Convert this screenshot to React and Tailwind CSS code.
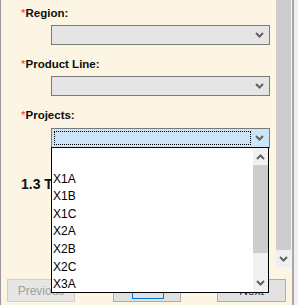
import React from 'react';

const font = { fontFamily: '"Liberation Sans", Arial, sans-serif' };

const Chevron = ({ up = false, className = '' }) => (
    <svg width="9" height="6" viewBox="0 0 9 6" className={className}>
        <path
            d={up ? 'M1 5 L4.5 1.5 L8 5' : 'M1 1 L4.5 4.5 L8 1'}
            fill="none"
            stroke="#606060"
            strokeWidth="2"
        />
    </svg>
);

const Label = ({ children, className = '' }) => (
    <div className={`h-4 leading-4 text-[11.5px] font-bold text-[#0d0d0d] ${className}`}>
        <span className="text-[#e8412c] font-normal">*</span>
        {children}
    </div>
);

const Select = ({ className = '' }) => (
    <div className={`ml-[30px] w-[219px] h-5 border border-[#7a7a7a] bg-[#e5e5e5] flex items-center justify-end pr-[5px] ${className}`}>
        <Chevron />
    </div>
);

const items = ['', 'X1A', 'X1B', 'X1C', 'X2A', 'X2B', 'X2C', 'X3A'];

const App = () => {
    return (
        <div className="w-[298px] h-[305px] flex bg-[#fcf5e4] overflow-hidden relative" style={font}>
            <div className="flex-1 flex flex-col border-l border-[#9a9a9a]">
                <div className="h-[267px] flex">
                    {/* form content */}
                    <div className="w-[275px] pl-5 pt-[5px]">
                        <Label>Region:</Label>
                        <Select className="mt-1" />
                        <Label className="mt-[11px]">Product Line:</Label>
                        <Select className="mt-1" />
                        <Label className="mt-[11px]">Projects:</Label>
                        <div className="ml-[30px] mt-[5px] w-[219px] h-5 border border-[#7a7a7a] bg-[#cce4f7] flex items-center p-[2px]">
                            <div className="flex-1 h-full border border-dotted border-black" />
                            <div className="w-[16px] flex justify-center">
                                <Chevron />
                            </div>
                        </div>
                        <div className="mt-[26px] text-[14px] font-bold text-[#111] leading-5">1.3 T</div>
                    </div>
                    {/* page scrollbar */}
                    <div className="w-[15px] flex flex-col">
                        <div className="flex-1 bg-[#cdcdcd]" />
                        <div className="h-[17px] bg-[#f0f0f0] flex items-center justify-center">
                            <Chevron />
                        </div>
                    </div>
                </div>
                {/* buttons */}
                <div className="flex-1 flex items-start pt-3 pl-[6px]">
                    <button className="w-[68px] h-[23px] border border-[#cfcfcf] bg-[#e6e6e6] text-[12px] text-[#a0a0a0]">Previous</button>
                    <button className="ml-[38px] w-[68px] h-[23px] border border-[#adadad] bg-[#e1e1e1] flex items-start pl-[18px] pt-0">
                        <span className="w-[32px] h-[19px] border border-[#0078d7] text-[12px] text-[#1a6b2a] leading-4">Save</span>
                    </button>
                    <button className="ml-[36px] w-[69px] h-[23px] border border-[#adadad] bg-[#e1e1e1] text-[12px] text-[#1a2a5a]">Next</button>
                </div>
            </div>
            {/* window frame */}
            <div className="w-[7px] flex">
                <div className="w-[1px] bg-[#f4f4f4]" />
                <div className="w-[2px] bg-[#a8a8a8]" />
                <div className="flex-1 bg-[#f0f0f0]" />
            </div>

            {/* open dropdown list */}
            <div className="absolute left-[51px] top-[147px] w-[218px] h-[146px] border border-black bg-white flex">
                <div className="flex-1 pt-[5px]">
                    {items.map((item, i) => (
                        <div key={i} className="h-[17.6px] leading-[17.6px] pl-[1px] text-[12px] text-black">
                            {item}
                        </div>
                    ))}
                </div>
                <div className="w-[15px] flex flex-col bg-[#f0f0f0]">
                    <div className="h-[17px] flex items-center justify-center">
                        <Chevron up />
                    </div>
                    <div className="h-[88px] bg-[#cdcdcd]" />
                    <div className="flex-1 flex items-end justify-center pb-[6px]">
                        <Chevron />
                    </div>
                </div>
            </div>
        </div>
    );
};

export default App;
